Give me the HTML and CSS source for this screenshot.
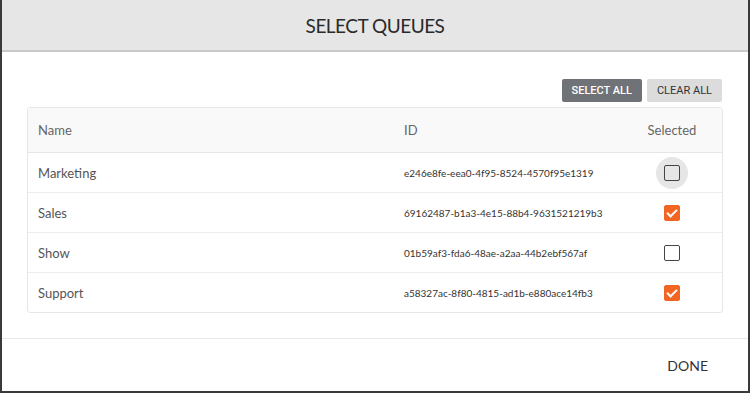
FILE: index.html
```html
<!DOCTYPE html>
<html>
<head>
    <title>Select Queues</title>
    <link rel="stylesheet" href="styles.css">
</head>
<body>
    <div class="dialog">
        <div class="dialog-header">
            <h1>SELECT QUEUES</h1>
        </div>

        <div class="dialog-body">
            <div class="actions">
                <button class="btn btn-dark">SELECT ALL</button>
                <button class="btn btn-light">CLEAR ALL</button>
            </div>

            <table class="queues">
                <thead>
                    <tr>
                        <th class="col-name">Name</th>
                        <th class="col-id">ID</th>
                        <th class="col-sel">Selected</th>
                    </tr>
                </thead>
                <tbody>
                    <tr>
                        <td>Marketing</td>
                        <td class="qid">e246e8fe-eea0-4f95-8524-4570f95e1319</td>
                        <td class="col-sel"><span class="ripple"><span class="check"></span></span></td>
                    </tr>
                    <tr>
                        <td>Sales</td>
                        <td class="qid">69162487-b1a3-4e15-88b4-9631521219b3</td>
                        <td class="col-sel"><span class="check checked"></span></td>
                    </tr>
                    <tr>
                        <td>Show</td>
                        <td class="qid">01b59af3-fda6-48ae-a2aa-44b2ebf567af</td>
                        <td class="col-sel"><span class="check"></span></td>
                    </tr>
                    <tr>
                        <td>Support</td>
                        <td class="qid">a58327ac-8f80-4815-ad1b-e880ace14fb3</td>
                        <td class="col-sel"><span class="check checked"></span></td>
                    </tr>
                </tbody>
            </table>
        </div>

        <div class="dialog-footer">
            <button class="btn-flat">DONE</button>
        </div>
    </div>
</body>
</html>
```

FILE: styles.css
```css
html, body {
    margin: 0;
    padding: 0;
    height: 100%;
}

body {
    background: #3a3a3a;
    font-family: Lato, "Open Sans", sans-serif;
    padding: 0 2px 2px 2px;
    box-sizing: border-box;
}

.dialog {
    background: white;
    height: 100%;
    display: flex;
    flex-direction: column;
}

.dialog-header {
    height: 50px;
    background: #e6e6e6;
    border-bottom: 2px solid #c9c9c9;
    display: flex;
    align-items: center;
    justify-content: center;
}

.dialog-header h1 {
    margin: 0;
    font-size: 19px;
    font-weight: normal;
    color: #2b2b2b;
    letter-spacing: -0.5px;
}

.dialog-body {
    padding: 27px 25px 25px 25px;
    border-bottom: 1px solid #e8e8e8;
}

.actions {
    display: flex;
    justify-content: flex-end;
    gap: 5px;
    margin-bottom: 5px;
    padding-right: 1px;
}

.btn {
    font-family: Roboto, sans-serif;
    font-size: 11px;
    font-weight: 500;
    height: 23px;
    padding: 0 10px;
    border: none;
    border-radius: 2px;
}

.btn-dark {
    background: #6f7378;
    color: white;
}

.btn-light {
    background: #dcdcdc;
    color: #333;
    font-weight: normal;
}

.queues {
    width: 100%;
    border-collapse: separate;
    border-spacing: 0;
    border: 1px solid #e6e6e6;
    border-radius: 3px;
    font-size: 13px;
    color: #555;
}

.queues th {
    background: #f9f9f9;
    font-weight: normal;
    color: #666;
    text-align: left;
    height: 44px;
    padding: 0 10px;
    border-bottom: 1px solid #e6e6e6;
}

.queues td {
    height: 39px;
    padding: 0 10px;
    border-bottom: 1px solid #ececec;
}

.queues tbody tr:last-child td {
    border-bottom: none;
}

.col-name {
    width: 346px;
}

.queues .col-sel {
    width: 80px;
    text-align: center;
    padding-left: 12px;
}

.qid {
    font-size: 10px;
    color: #333;
}

.ripple {
    display: inline-flex;
    align-items: center;
    justify-content: center;
    width: 32px;
    height: 32px;
    margin: -8px 0;
    border-radius: 50%;
    background: #e6e6e6;
    vertical-align: middle;
}

.check {
    display: inline-block;
    width: 14px;
    height: 14px;
    border: 1px solid #444;
    border-radius: 2px;
    vertical-align: middle;
    position: relative;
}

.check.checked {
    background: #f26522;
    border-color: #f26522;
}

.check.checked::after {
    content: "";
    position: absolute;
    left: 4px;
    top: 1px;
    width: 4px;
    height: 8px;
    border: solid white;
    border-width: 0 2px 2px 0;
    transform: rotate(45deg);
}

.dialog-footer {
    flex: 1;
    display: flex;
    justify-content: flex-end;
    align-items: center;
    padding: 0 40px;
}

.btn-flat {
    background: none;
    border: none;
    font-family: Lato, sans-serif;
    font-size: 14px;
    color: #333;
    padding: 4px 10px;
    margin-right: -10px;
}
```
